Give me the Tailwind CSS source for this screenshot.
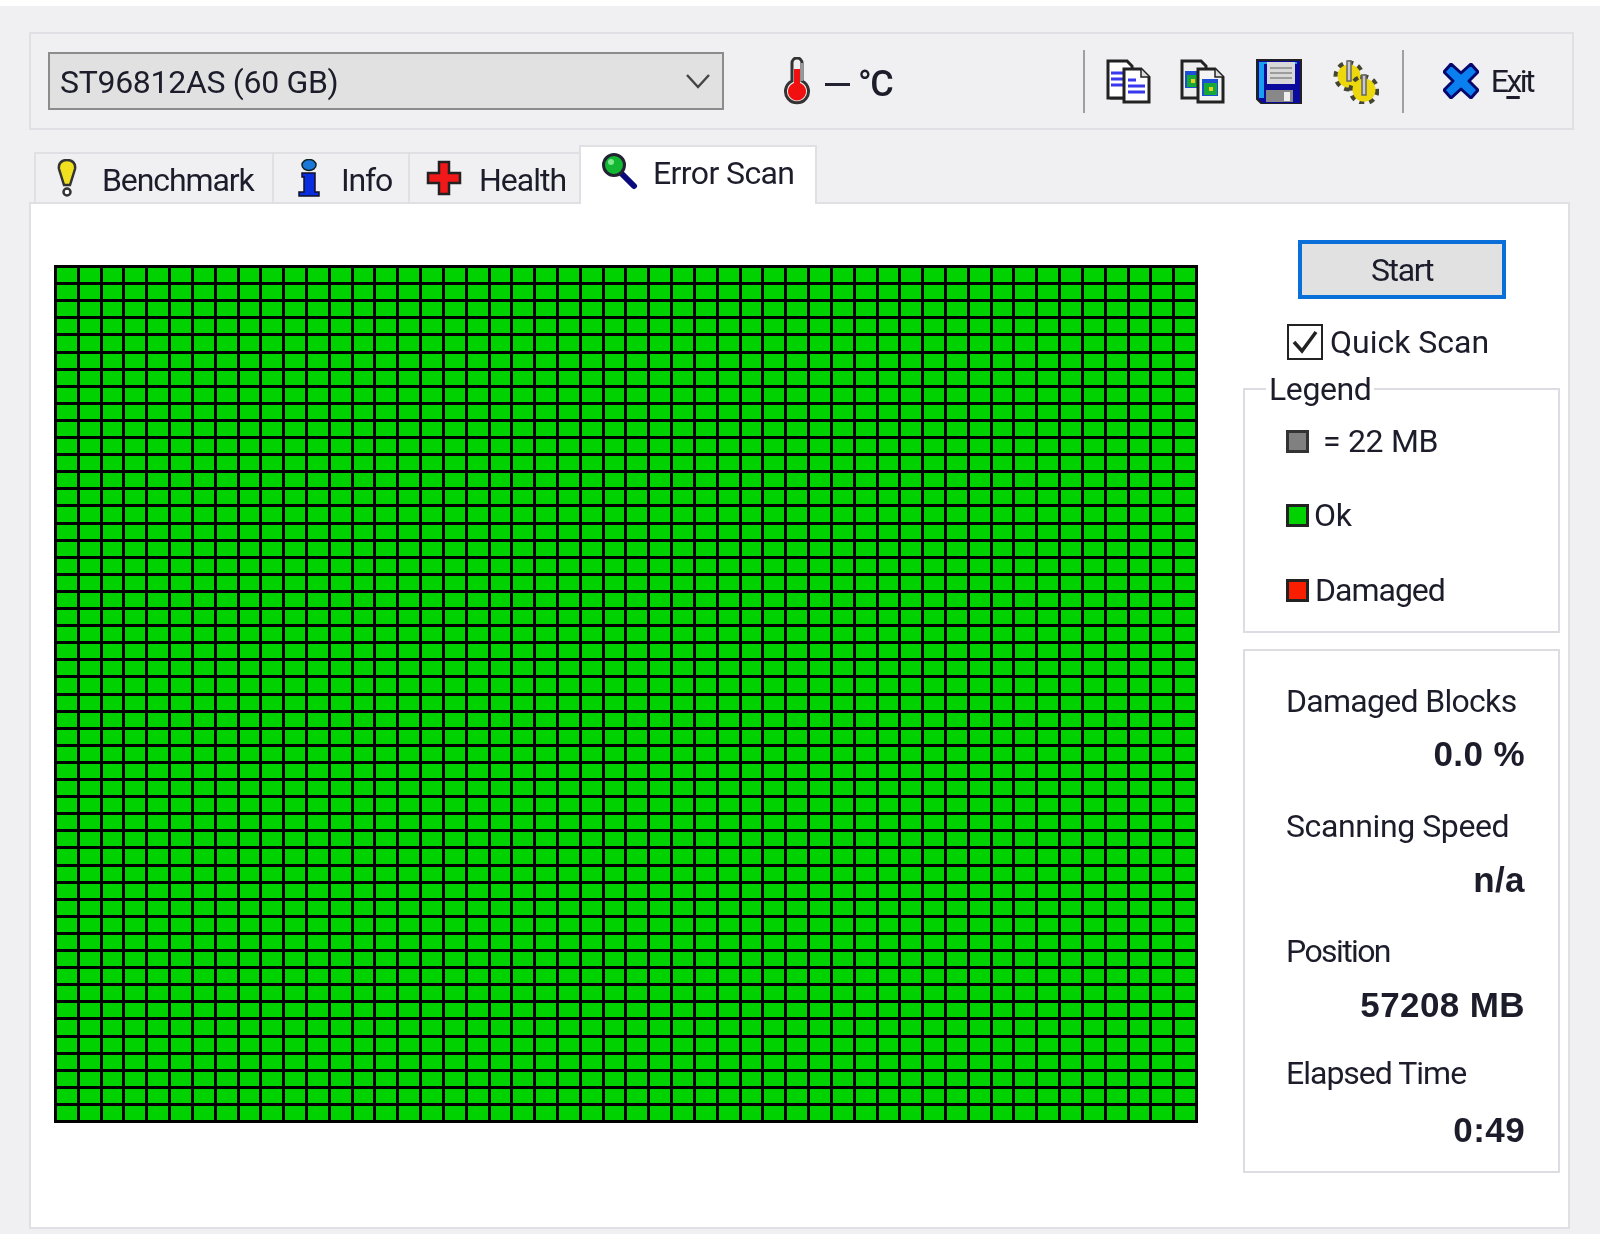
<!DOCTYPE html>
<html lang="en">

<head>
  <meta charset="UTF-8">
  <title>HD Tune - Error Scan</title>
  <script src="https://cdn.jsdelivr.net/npm/@tailwindcss/browser@4"></script>
</head>

<body class="w-[1600px] h-[1234px] overflow-hidden bg-[#f0eff2] font-['Roboto',sans-serif] text-[32px] text-[#1c1c2a]">
<div class="h-full blur-[0.7px]">

  <div class="h-[6px] bg-white"></div>

  <!-- Toolbar -->
  <div class="mt-[26px] ml-[29px] w-[1545px] h-[98px] border-2 border-[#e0e0e4] pl-[17px] pr-[39px] flex items-center">
    <div class="w-[676px] h-[58px] border-2 border-[#8c8c8c] bg-[#e1e1e2] pl-[10px] pr-[11px] flex items-center justify-between">
      <span class="mt-[2px] tracking-[-0.3px]">ST96812AS (60 GB)</span>
      <svg class="w-[26px] h-[16px]" viewBox="0 0 26 16" fill="none" stroke="#444" stroke-width="2.4"><path d="M2 2l11 12L24 2" /></svg>
    </div>

    <svg class="ml-[59px] w-[28px] h-[48px]" viewBox="0 0 28 48">
      <path d="M9 6a5 5 0 0 1 10 0v18a11.500 11.500 0 1 1-10 0z" fill="#eee" stroke="#333" stroke-width="3" />
      <path d="M11 12h6v14a9 9 0 1 1-6 0z" fill="#f01010" />
      <path d="M19 6v18" stroke="#999" stroke-width="2" />
    </svg>
    <span class="ml-[14px] w-[25px] h-[3px] bg-[#223] mt-[6px]"></span>
    <span class="ml-[8px] mt-[5px] text-[36px] tracking-[-1.5px] font-medium">°C</span>

    <div class="ml-auto flex items-center">
      <span class="w-[2px] h-[63px] bg-[#a0a0a4]"></span>

      <svg class="ml-[20px] w-[46px] h-[45px]" viewBox="0 0 46 45">
        <path d="M5 4h19l5 5v32H5z" fill="#333" opacity="0.5" />
        <path d="M3 2h19l5 5v32H3z" fill="#fff" stroke="#222" stroke-width="3" />
        <path d="M6 14h14M6 20h18M6 26h16" stroke="#3838ee" stroke-width="3" />
        <path d="M19 10h17l8 8v25H19z" fill="#fff" stroke="#222" stroke-width="3" />
        <path d="M36 10v8h8" fill="#ddd" stroke="#222" stroke-width="1.500" />
        <path d="M23 21h8M23 27h17M23 33h17" stroke="#3838ee" stroke-width="3" />
      </svg>

      <svg class="ml-[28px] w-[46px] h-[45px]" viewBox="0 0 46 45">
        <path d="M3 2h19l5 5v32H3z" fill="#eee" stroke="#222" stroke-width="3" />
        <rect x="6" y="12" width="15" height="17" fill="#1b4fd8" />
        <rect x="8" y="16" width="12" height="12" fill="#18a838" />
        <rect x="12" y="20" width="4" height="4" fill="#e8d020" />
        <path d="M19 10h17l8 8v25H19z" fill="#f4f4f4" stroke="#222" stroke-width="3" />
        <path d="M36 10v8h8" fill="#ddd" stroke="#222" stroke-width="1.500" />
        <rect x="23" y="20" width="16" height="17" fill="#1b4fd8" />
        <rect x="25" y="24" width="13" height="12" fill="#18a838" />
        <rect x="30" y="28" width="4" height="4" fill="#e8d020" />
      </svg>

      <svg class="ml-[31px] w-[46px] h-[45px]" viewBox="0 0 46 45">
        <path d="M1 1h44v44H6l-5-5z" fill="#0a0a9c" stroke="#222" stroke-width="2" />
        <path d="M3 3h5v36H3z" fill="#18a0ee" />
        <path d="M3 3h38v2H3z" fill="#18a0ee" />
        <rect x="11" y="3" width="28" height="22" fill="#d8d8d8" />
        <path d="M14 9h22M14 14h22M14 19h22" stroke="#888" stroke-width="1.500" />
        <rect x="10" y="31" width="27" height="12" fill="#888" />
        <rect x="28" y="33" width="6" height="9" fill="#eee" />
      </svg>

      <svg class="ml-[31px] w-[46px] h-[45px]" viewBox="0 0 46 45">
        <circle cx="16" cy="17" r="13" fill="none" stroke="#443" stroke-width="5" stroke-dasharray="5 5" />
        <circle cx="16" cy="17" r="11.500" fill="#ecd80c" />
        <circle cx="31" cy="31" r="13" fill="none" stroke="#443" stroke-width="5" stroke-dasharray="5 5" />
        <circle cx="31" cy="31" r="11.500" fill="#ecd80c" />
        <path d="M14 2h4v20h-4zM29 16h4v20h-4z" fill="#c8c8d0" stroke="#666" stroke-width="1.500" />
      </svg>

      <span class="ml-[23px] w-[2px] h-[63px] bg-[#a0a0a4]"></span>

      <svg class="ml-[39px] w-[36px] h-[36px]" viewBox="0 0 36 36">
        <path d="M8 1l10 9 10-9 7 8-9 9 9 9-7 8-10-9-10 9-7-8 9-9-9-9z" fill="#0a80f0" stroke="#08086c" stroke-width="3" stroke-linejoin="round" />
      </svg>
      <span class="ml-[12px] tracking-[-2.5px]">E<u class="underline-offset-[4px]">x</u>it</span>
    </div>
  </div>

  <!-- Tabs -->
  <div class="ml-[34px] mt-[15px] h-[59px] -mb-[2px] relative z-10 flex items-start">
    <div class="mt-[7px] w-[238px] h-[50px] border-l-2 border-t-2 border-[#e0e0e4] flex items-center">
      <svg class="ml-[21px] w-[20px] h-[38px]" viewBox="0 0 20 38">
        <path d="M10 1c5 0 9 3 8 9l-5 16H7L2 10C1 4 5 1 10 1z" fill="#f0e020" stroke="#333" stroke-width="2.500" />
        <circle cx="10" cy="33" r="3.500" fill="#fff" stroke="#333" stroke-width="2.500" />
      </svg>
      <span class="ml-[25px] mt-[4px] tracking-[-1.1px]">Benchmark</span>
    </div>
    <div class="mt-[7px] w-[136px] h-[50px] border-l-2 border-t-2 border-[#e0e0e4] flex items-center">
      <svg class="ml-[23px] w-[24px] h-[38px]" viewBox="0 0 24 38">
        <ellipse cx="12" cy="6" rx="7" ry="5.500" fill="#1a78d8" stroke="#122" stroke-width="1.500" />
        <path d="M5 14h13v19h4v4H2v-4h5V18H5z" fill="#0a2ce0" stroke="#112" stroke-width="1.500" />
      </svg>
      <span class="ml-[20px] mt-[4px] tracking-[-1.2px]">Info</span>
    </div>
    <div class="mt-[7px] w-[171px] h-[50px] border-l-2 border-t-2 border-[#e0e0e4] flex items-center">
      <svg class="ml-[16px] w-[36px] h-[36px]" viewBox="0 0 36 36">
        <path d="M13 2h10v11h11v10H23v11H13V23H2V13h11z" fill="#f01818" stroke="#222" stroke-width="2.500" />
      </svg>
      <span class="ml-[17px] mt-[4px] tracking-[-1px]">Health</span>
    </div>
    <div class="w-[238px] h-[59px] border-x-2 border-t-2 border-[#e0e0e4] bg-white flex items-start">
      <svg class="ml-[20px] mt-[5px] w-[38px] h-[38px]" viewBox="0 0 38 38">
        <path d="M19 20l14 14" stroke="#0a0a7c" stroke-width="6" stroke-linecap="round" />
        <circle cx="13" cy="13" r="10.500" fill="#12b832" stroke="#223" stroke-width="3" />
        <circle cx="10" cy="10" r="3" fill="#80e890" />
      </svg>
      <span class="ml-[14px] mt-[2px] tracking-[-0.6px]">Error Scan</span>
    </div>
  </div>

  <!-- Main panel -->
  <div class="ml-[29px] w-[1541px] h-[1027px] border-2 border-[#e0e0e4] bg-white flex pl-[23px] pr-[8px]">
    <div id="blocks" class="mt-[61px] w-[1144px] h-[858px] bg-black p-[3px] gap-[3px] grid grid-cols-[repeat(50,1fr)] grid-rows-[repeat(50,1fr)]"></div>

    <div class="ml-auto mt-[36px] w-[317px]">
      <button class="ml-[55px] w-[208px] h-[59px] border-4 border-[#0a6fd8] bg-[#e1e1e2] tracking-[-1.4px]">Start</button>

      <label class="mt-[25px] ml-[44px] flex items-center h-[35px]">
        <span class="w-[36px] h-[36px] border-2 border-[#222] flex items-center justify-center">
          <svg class="w-[28px] h-[26px]" viewBox="0 0 28 26" fill="none" stroke="#222" stroke-width="3.500"><path d="M3 13l8 9L25 3" /></svg>
        </span>
        <span class="ml-[7px] tracking-[0px]">Quick Scan</span>
      </label>

      <fieldset class="mt-[12px] h-[262px] border-2 border-[#dcdce2]">
        <legend class="ml-[21px] px-[3px] leading-[36px] tracking-[-0.4px]">Legend</legend>
        <div class="ml-[41px] mt-[14px] h-[40px] flex items-center">
          <span class="w-[23px] h-[23px] border-[3px] border-[#333] bg-[#808080]"></span>
          <span class="ml-[14px] tracking-[-0.3px]">= 22 MB</span>
        </div>
        <div class="ml-[41px] mt-[34px] h-[40px] flex items-center">
          <span class="w-[23px] h-[23px] border-[3px] border-[#222] bg-[#00d200]"></span>
          <span class="ml-[5px] tracking-[-0.3px]">Ok</span>
        </div>
        <div class="ml-[41px] mt-[35px] h-[40px] flex items-center">
          <span class="w-[23px] h-[23px] border-[3px] border-[#222] bg-[#fa1e00]"></span>
          <span class="ml-[6px] tracking-[-1px]">Damaged</span>
        </div>
      </fieldset>

      <div class="mt-[16px] h-[524px] border-2 border-[#dcdce2] pl-[41px] pr-[33px] pt-[30px] leading-[40px] whitespace-nowrap">
        <div class="tracking-[-0.7px]">Damaged Blocks</div>
        <div class="mt-[13px] text-right text-[35px] font-bold font-['Liberation_Sans',sans-serif] tracking-[0.4px]">0.0 %</div>
        <div class="mt-[32px] tracking-[-0.4px]">Scanning Speed</div>
        <div class="mt-[14px] text-right text-[35px] font-bold font-['Liberation_Sans',sans-serif] tracking-[0.4px]">n/a</div>
        <div class="mt-[31px] tracking-[-1.6px]">Position</div>
        <div class="mt-[14px] text-right text-[35px] font-bold font-['Liberation_Sans',sans-serif] tracking-[0.4px]">57208 MB</div>
        <div class="mt-[28px] tracking-[-1px]">Elapsed Time</div>
        <div class="mt-[17px] text-right text-[35px] font-bold font-['Liberation_Sans',sans-serif] tracking-[0.4px]">0:49</div>
      </div>
    </div>
  </div>

</div>

  <script>
    // 50 x 50 block map, every block scanned ok
    const blocks = document.getElementById("blocks");
    for (let i = 0; i < 2500; i++) {
      const cell = document.createElement("div");
      cell.className = "bg-[#00d200]";
      blocks.appendChild(cell);
    }
  </script>

</body>

</html>
